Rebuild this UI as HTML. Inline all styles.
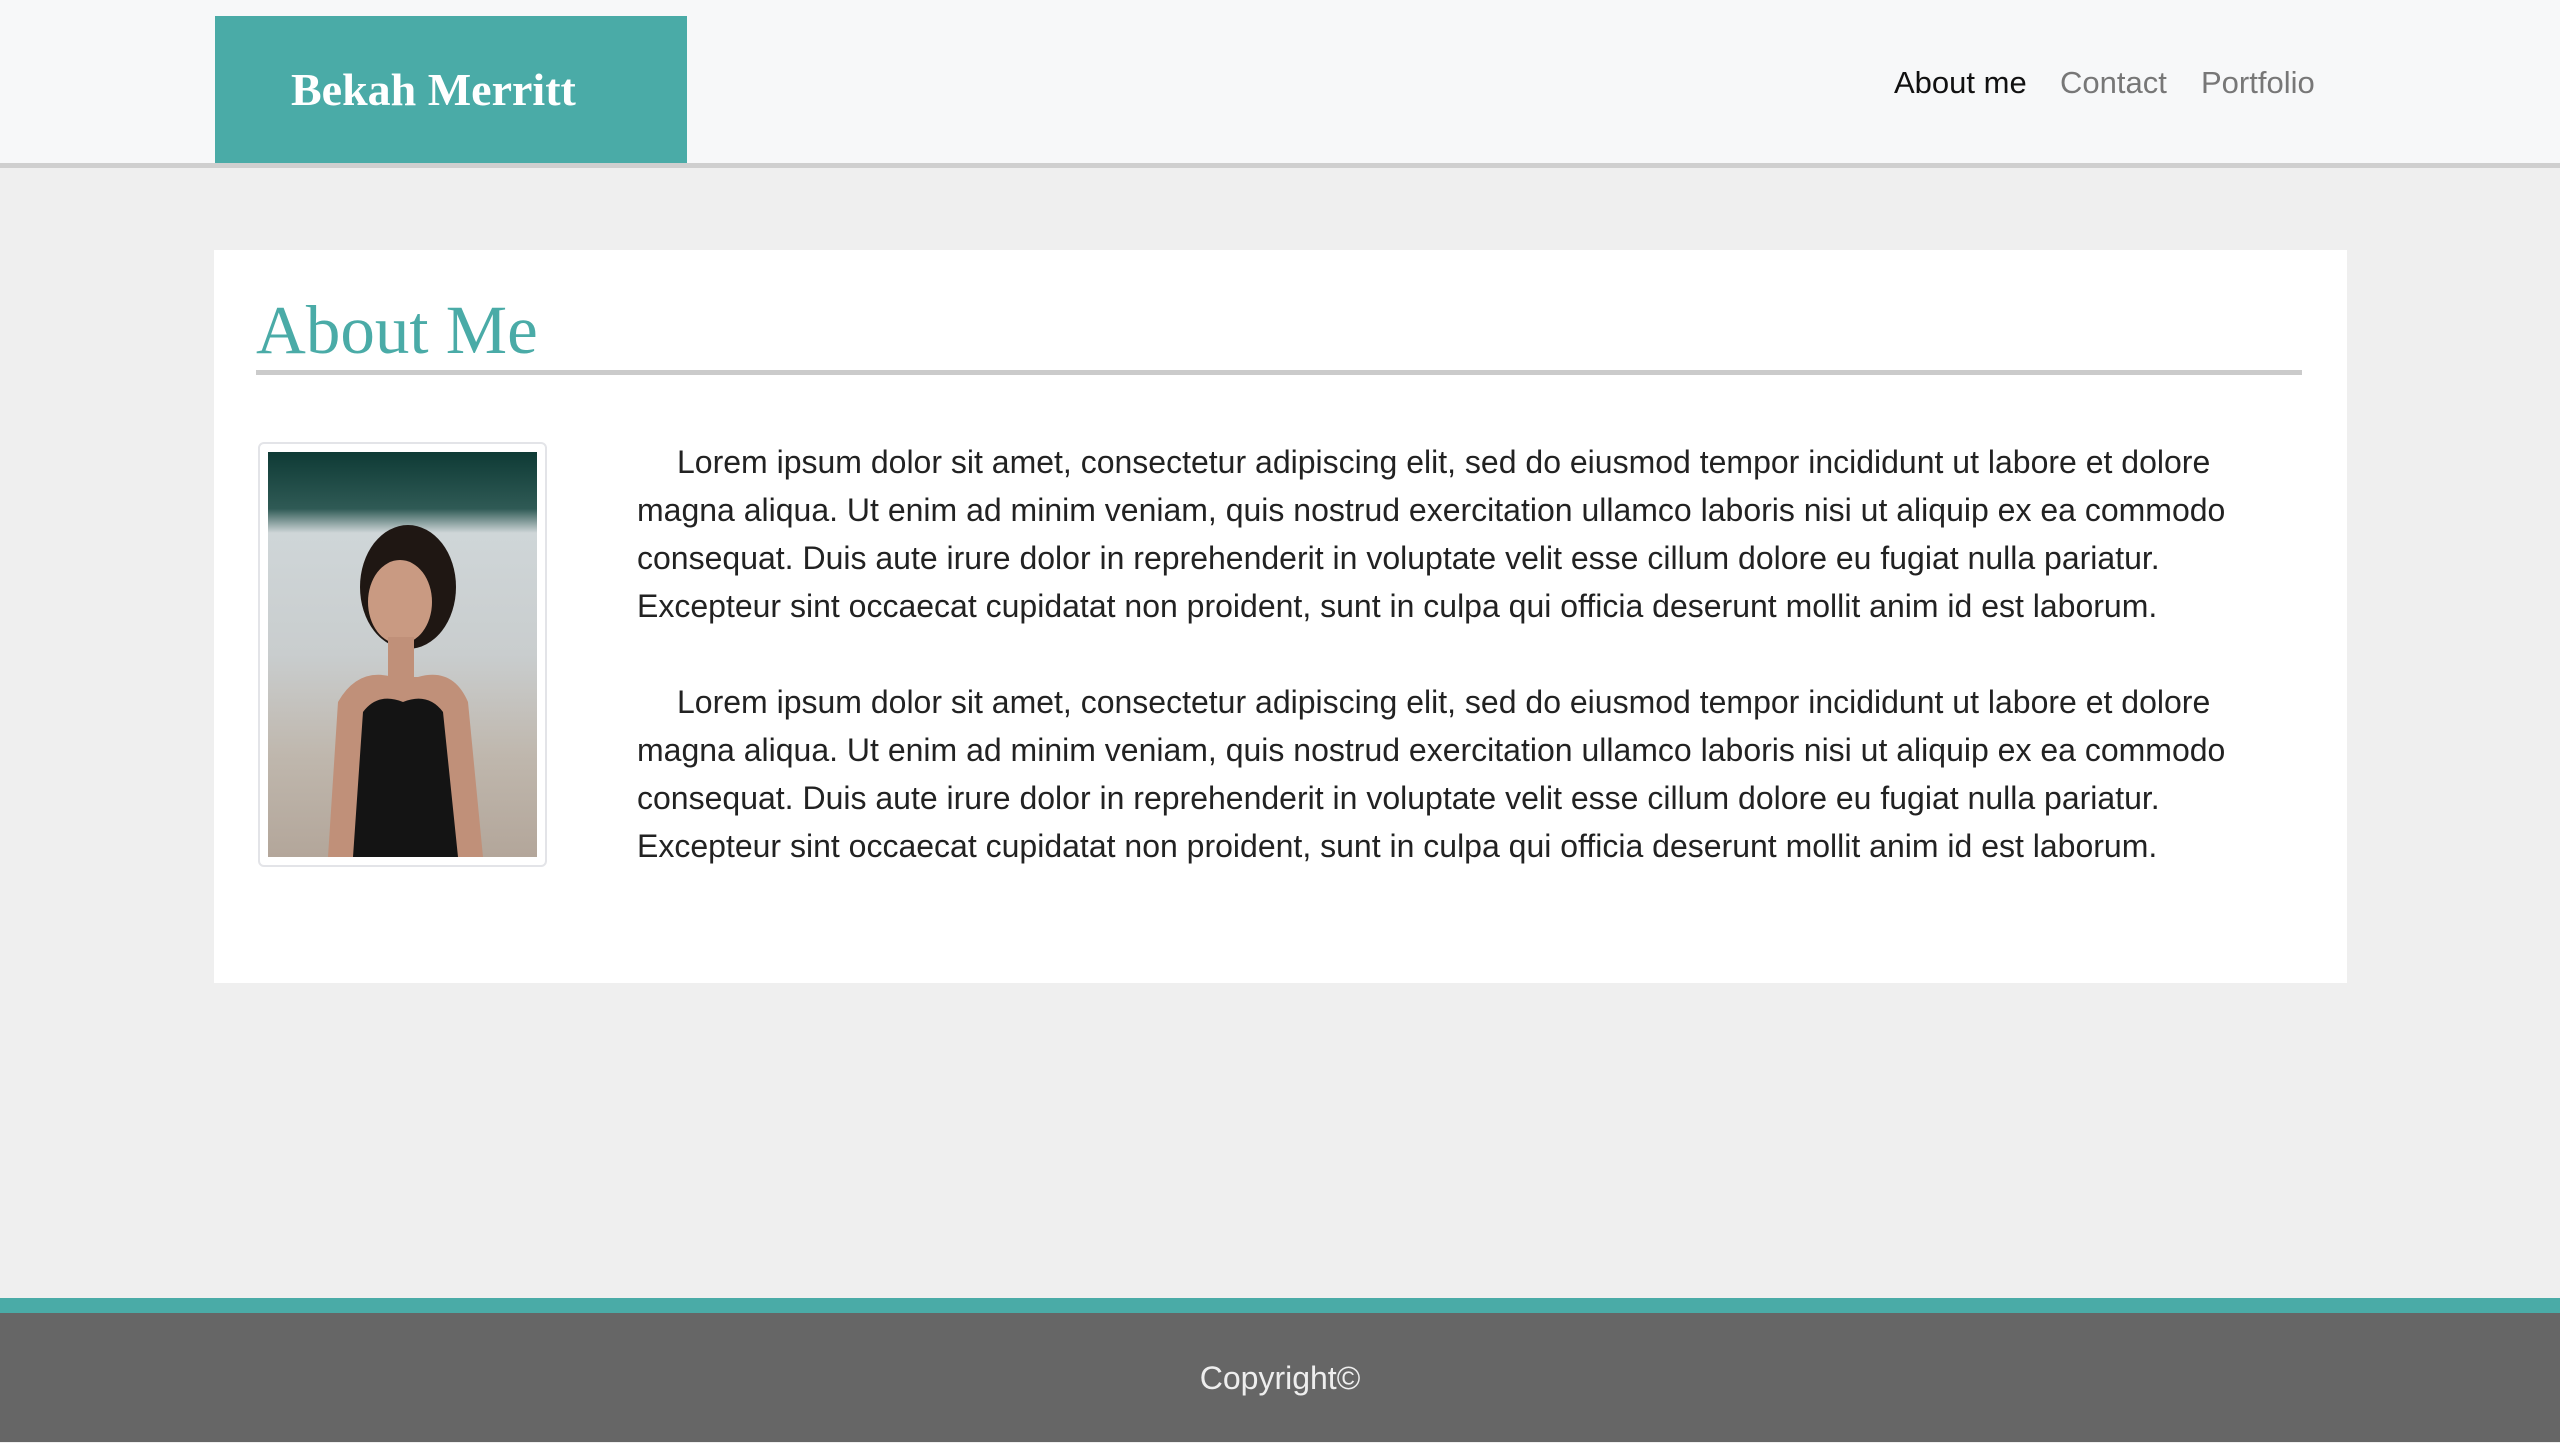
<!DOCTYPE html>
<html><head><meta charset="utf-8"><style>
*{margin:0;padding:0;box-sizing:border-box}
body{width:2560px;height:1442px;background:#efefef;position:relative;overflow:hidden;font-family:"Liberation Sans",sans-serif}
.hdr{position:absolute;left:0;top:0;width:2560px;height:168px;background:#f7f8f9;border-bottom:5px solid #cfcfcf}
.logo{position:absolute;left:215px;top:16px;width:472px;height:147px;background:#4aaba7;color:#fff;font-family:"Liberation Serif",serif;font-weight:bold;font-size:46px;line-height:147px;padding-left:76px}
.nav{position:absolute;top:63px;font-size:31px;color:#777;line-height:40px}
.card{position:absolute;left:214px;top:250px;width:2133px;height:733px;background:#fff}
h1{position:absolute;left:256px;top:290px;font-family:"Liberation Serif",serif;font-weight:normal;font-size:69px;color:#4aaba7;line-height:80px}
.rule{position:absolute;left:256px;top:370px;width:2046px;height:5px;background:#cbcbcb}
.frame{position:absolute;left:258px;top:442px;width:289px;height:425px;border:2px solid #e3e4e8;border-radius:6px;background:#fff}
.photo{position:absolute;left:268px;top:452px;width:269px;height:405px;background:linear-gradient(180deg,#0e3a35 0%,#2f5a55 14%,#cfd6d8 20%,#c9cdce 50%,#bfb7ad 75%,#b3a69a 100%)}
.p{position:absolute;left:637px;width:1610px;font-size:32px;line-height:48px;color:#222;text-indent:40px}
.ft1{position:absolute;left:0;top:1298px;width:2560px;height:15px;background:#4aaba7}
.ft2{position:absolute;left:0;top:1313px;width:2560px;height:129px;background:#666;color:#eee;font-size:32px;text-align:center;line-height:130px}
</style></head><body>
<div class="hdr"><div class="logo">Bekah Merritt</div>
<div class="nav" style="left:1894px;color:#111">About me</div>
<div class="nav" style="left:2060px">Contact</div>
<div class="nav" style="left:2201px">Portfolio</div></div>
<div class="card"></div>
<h1>About Me</h1><div class="rule"></div>
<div class="frame"></div>
<div class="photo">
<svg width="269" height="405" viewBox="0 0 269 405"><ellipse cx="140" cy="135" rx="48" ry="62" fill="#1f1713"/><ellipse cx="132" cy="150" rx="32" ry="42" fill="#c99a82"/><rect x="120" y="185" width="26" height="40" fill="#c09079"/><path d="M60 405 L70 250 Q90 215 125 225 L150 225 Q185 215 200 250 L215 405Z" fill="#c09079"/><path d="M85 405 L95 260 Q110 240 135 250 Q160 240 175 260 L190 405Z" fill="#141414"/></svg></div>
<div class="p" style="top:438px">Lorem ipsum dolor sit amet, consectetur adipiscing elit, sed do eiusmod tempor incididunt ut labore et dolore magna aliqua. Ut enim ad minim veniam, quis nostrud exercitation ullamco laboris nisi ut aliquip ex ea commodo consequat. Duis aute irure dolor in reprehenderit in voluptate velit esse cillum dolore eu fugiat nulla pariatur. Excepteur sint occaecat cupidatat non proident, sunt in culpa qui officia deserunt mollit anim id est laborum.</div>
<div class="p" style="top:678px">Lorem ipsum dolor sit amet, consectetur adipiscing elit, sed do eiusmod tempor incididunt ut labore et dolore magna aliqua. Ut enim ad minim veniam, quis nostrud exercitation ullamco laboris nisi ut aliquip ex ea commodo consequat. Duis aute irure dolor in reprehenderit in voluptate velit esse cillum dolore eu fugiat nulla pariatur. Excepteur sint occaecat cupidatat non proident, sunt in culpa qui officia deserunt mollit anim id est laborum.</div>
<div class="ft1"></div><div class="ft2">Copyright©</div>
</body></html>
